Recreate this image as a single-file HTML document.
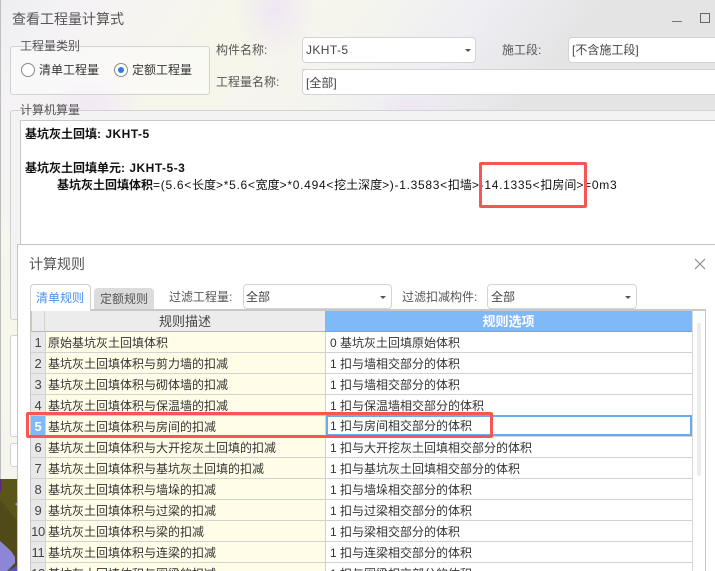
<!DOCTYPE html>
<html><head><meta charset="utf-8">
<style>
html,body{margin:0;padding:0;background:#e5e4e5}
#p{position:relative;width:715px;height:571px;overflow:hidden;font-family:"Liberation Sans","Noto Sans CJK SC",sans-serif;font-size:12px;color:#333;
background:
radial-gradient(ellipse 50px 30px at 90px 105px,#f0e8f4,rgba(240,232,244,0)),
radial-gradient(ellipse 40px 50px at 275px 10px,#efe6f3,rgba(239,230,243,0)),
radial-gradient(ellipse 40px 16px at 410px 108px,#efe6f3,rgba(239,230,243,0)),
linear-gradient(128deg,#eeeef2 0,#f5f3f5 8%,#f6f6ea 22%,#f5f5ee 32%,#eeeef3 42%,#e5e4e5 52%,#e4e3e4 100%)}
.a{position:absolute;box-sizing:border-box}
.t{position:absolute;white-space:nowrap;line-height:16px}
.w{position:absolute;box-sizing:border-box;background:#fff;border:1px solid #d4d4d4;border-radius:4px}
.arr{position:absolute;width:0;height:0;border-left:3.5px solid transparent;border-right:3.5px solid transparent;border-top:3.5px solid #555}
.row{position:absolute;left:31px;width:661px;height:21px;box-sizing:border-box;border-bottom:1px solid #d2d2d2}
.n{position:absolute;left:0;top:0;width:14px;height:20px;background:#e8e8e8;text-align:center;line-height:21px;font-size:13px;color:#444;border-right:1px solid #d2d2d2;box-sizing:content-box;white-space:nowrap;letter-spacing:-.3px}
.d{position:absolute;left:15px;top:0;height:20px;background:#fffde8;border-right:1px solid #d2d2d2;line-height:22px;padding-left:2px;box-sizing:content-box;white-space:nowrap;width:277px;overflow:hidden}
.o{position:absolute;left:295px;top:0;width:366px;height:20px;background:#fff;line-height:22px;padding-left:4px;box-sizing:border-box;white-space:nowrap;overflow:hidden}
.f{letter-spacing:.71px}
.f i{font-style:normal;letter-spacing:0}
.bl{letter-spacing:.5px}
.bl i{font-style:normal;letter-spacing:0}
</style></head><body><div id="p">

<div class="a" style="left:0;top:0;width:1px;height:480px;background:#bdbdbd"></div>
<div class="t" style="left:12px;top:11px;font-size:14px;color:#555">查看工程量计算式</div>
<div class="a" style="left:672px;top:21px;width:10px;height:1px;background:#777"></div>
<div class="a" style="left:700px;top:13px;width:10px;height:10px;border:1px solid #666"></div>

<!-- group 1 -->
<div class="a" style="left:10px;top:46px;width:200px;height:49px;border:1px solid #d2d2d2;border-radius:3px;background:rgba(255,255,255,.45)"></div>
<div class="t" style="left:20px;top:38px;color:#555">工程量类别</div>
<div class="a" style="left:21px;top:63px;width:14px;height:14px;border:1px solid #8a8a8a;border-radius:50%;background:#fff"></div>
<div class="t" style="left:39px;top:62px">清单工程量</div>
<div class="a" style="left:114px;top:63px;width:14px;height:14px;border:1px solid #8a8a8a;border-radius:50%;background:#fff"></div>
<div class="a" style="left:118px;top:67px;width:6px;height:6px;border-radius:50%;background:#2a7de1"></div>
<div class="t" style="left:132px;top:62px">定额工程量</div>

<div class="t" style="left:216px;top:42px;color:#555">构件名称:</div>
<div class="w" style="left:302px;top:37px;width:174px;height:26px"></div>
<div class="t" style="left:306px;top:42px;color:#444;letter-spacing:.4px">JKHT-5</div>
<div class="arr" style="left:465px;top:49px"></div>
<div class="t" style="left:502px;top:42px;color:#555">施工段:</div>
<div class="w" style="left:568px;top:37px;width:160px;height:26px"></div>
<div class="t" style="left:572px;top:42px;color:#444">[不含施工段]</div>
<div class="a" style="left:302px;top:69px;width:413px;height:1px;background:#cfcfcf"></div>
<div class="t" style="left:216px;top:74px;color:#555">工程量名称:</div>
<div class="w" style="left:302px;top:69px;width:430px;height:26px"></div>
<div class="t" style="left:306px;top:75px;color:#444">[全部]</div>

<!-- group 2 -->
<div class="a" style="left:10px;top:110px;width:720px;height:210px;border:1px solid #d2d2d2;border-radius:3px;background:#f3f3f3"></div>
<div class="t" style="left:20px;top:102px;color:#555">计算机算量</div>
<div class="a" style="left:20px;top:120px;width:710px;height:130px;background:#fff;border:1px solid #c8c8c8"></div>
<div class="t bl" style="left:25px;top:126px;font-weight:bold;color:#111"><i>基坑灰土回填</i>: JKHT-5</div>
<div class="t bl" style="left:25px;top:160px;font-weight:bold;color:#111"><i>基坑灰土回填单元</i>: JKHT-5-3</div>
<div class="t f" style="left:57px;top:177px;color:#111"><b style="letter-spacing:0">基坑灰土回填体积</b>=(5.6&lt;<i>长度</i>&gt;*5.6&lt;<i>宽度</i>&gt;*0.494&lt;<i>挖土深度</i>&gt;)-1.3583&lt;<i>扣墙</i>&gt;-14.1335&lt;<i>扣房间</i>&gt;=0m3</div>
<div class="a" style="left:479px;top:162px;width:108px;height:46px;border:3px solid #f85555;border-radius:2px"></div>

<!-- background boxes left of dialog -->
<div class="a" style="left:10px;top:335px;width:20px;height:102px;background:#fff;border:1px solid #d2d2d2;border-radius:3px"></div>
<div class="a" style="left:10px;top:443px;width:20px;height:24px;background:#fff;border:1px solid #d2d2d2;border-radius:3px"></div>

<!-- 3D view -->
<svg class="a" style="left:0;top:479px" width="18" height="92" viewBox="0 0 18 92">
<rect width="18" height="92" fill="#5a5518"/>
<polygon points="0,20 17,42 17,92 0,92" fill="#4f4a18"/>
<rect x="0" y="0" width="1.5" height="13" fill="#5b2a86"/>
<polygon points="0,62 11,72 15,78 15,84 7,92 0,92" fill="#8d86d6"/>
<polygon points="7,92 17,87 18,92" fill="#5b52b8"/>
<polygon points="15,25 18,23 18,28" fill="#9a94d0"/>
</svg>

<!-- dialog -->
<div class="a" style="left:17px;top:244px;width:710px;height:340px;background:#fff;border:1px solid #c4c4c4"></div>
<div class="t" style="left:29px;top:256px;font-size:14px;color:#555">计算规则</div>
<svg class="a" style="left:694px;top:258px" width="12" height="12" viewBox="0 0 12 12"><path d="M1 1L11 11M11 1L1 11" stroke="#888" stroke-width="1.1" fill="none"/></svg>

<div class="a" style="left:94px;top:288px;width:60px;height:22px;background:#dcdcdc;border-radius:4px 4px 0 0"></div>
<div class="t" style="left:100px;top:291px;color:#555">定额规则</div>
<div class="a" style="left:30px;top:284px;width:61px;height:27px;background:#fff;border:1px solid #cfcfcf;border-bottom:none;border-radius:4px 4px 0 0;z-index:2"></div>
<div class="t" style="left:36px;top:290px;color:#4a90f0;z-index:3">清单规则</div>

<div class="t" style="left:169px;top:289px;color:#555">过滤工程量:</div>
<div class="w" style="left:243px;top:284px;width:149px;height:25px"></div>
<div class="t" style="left:246px;top:289px;color:#444">全部</div>
<div class="arr" style="left:380px;top:296px"></div>
<div class="t" style="left:402px;top:289px;color:#555">过滤扣减构件:</div>
<div class="w" style="left:487px;top:284px;width:150px;height:25px"></div>
<div class="t" style="left:491px;top:289px;color:#444">全部</div>
<div class="arr" style="left:625px;top:296px"></div>

<!-- table -->
<div class="a" style="left:30px;top:309px;width:676px;height:270px;border:2px solid #c8c8c8;border-right-width:1.5px;border-bottom:none;background:#fff"></div>
<div class="a" style="left:697px;top:323px;width:4px;height:153px;background:#ececec;border-radius:2px"></div>
<div class="a" style="left:692px;top:311px;width:1px;height:260px;background:#d8d8d8"></div>

<div class="a" style="left:32px;top:311px;width:293px;height:21px;background:#ececec;border-bottom:1px solid #b5b5b5"></div>
<div class="a" style="left:44px;top:311px;width:1px;height:260px;background:#d2d2d2"></div>
<div class="t" style="left:45px;top:314px;width:280px;text-align:center;color:#444;font-size:13px">规则描述</div>
<div class="a" style="left:325px;top:311px;width:367px;height:21px;background:#7fb9f8;border-bottom:1px solid #6aa8ea"></div>
<div class="t" style="left:325px;top:314px;width:367px;text-align:center;color:#fff;font-weight:bold;font-size:13px">规则选项</div>

<div class="row" style="top:332px"><div class="n">1</div><div class="d">原始基坑灰土回填体积</div><div class="o">0 基坑灰土回填原始体积</div></div>
<div class="row" style="top:353px"><div class="n">2</div><div class="d">基坑灰土回填体积与剪力墙的扣减</div><div class="o">1 扣与墙相交部分的体积</div></div>
<div class="row" style="top:374px"><div class="n">3</div><div class="d">基坑灰土回填体积与砌体墙的扣减</div><div class="o">1 扣与墙相交部分的体积</div></div>
<div class="row" style="top:395px"><div class="n">4</div><div class="d">基坑灰土回填体积与保温墙的扣减</div><div class="o">1 扣与保温墙相交部分的体积</div></div>
<div class="row" style="top:416px"><div class="n" style="background:#7fb9f8;color:#fff;font-weight:bold">5</div><div class="d">基坑灰土回填体积与房间的扣减</div><div class="o" style="border:2px solid #6aaaee;padding-left:2px;line-height:18px;top:-1px;height:21px">1 扣与房间相交部分的体积</div></div>
<div class="row" style="top:437px"><div class="n">6</div><div class="d">基坑灰土回填体积与大开挖灰土回填的扣减</div><div class="o">1 扣与大开挖灰土回填相交部分的体积</div></div>
<div class="row" style="top:458px"><div class="n">7</div><div class="d">基坑灰土回填体积与基坑灰土回填的扣减</div><div class="o">1 扣与基坑灰土回填相交部分的体积</div></div>
<div class="row" style="top:479px"><div class="n">8</div><div class="d">基坑灰土回填体积与墙垛的扣减</div><div class="o">1 扣与墙垛相交部分的体积</div></div>
<div class="row" style="top:500px"><div class="n">9</div><div class="d">基坑灰土回填体积与过梁的扣减</div><div class="o">1 扣与过梁相交部分的体积</div></div>
<div class="row" style="top:521px"><div class="n">10</div><div class="d">基坑灰土回填体积与梁的扣减</div><div class="o">1 扣与梁相交部分的体积</div></div>
<div class="row" style="top:542px"><div class="n">11</div><div class="d">基坑灰土回填体积与连梁的扣减</div><div class="o">1 扣与连梁相交部分的体积</div></div>
<div class="row" style="top:563px"><div class="n">12</div><div class="d">基坑灰土回填体积与圈梁的扣减</div><div class="o">1 扣与圈梁相交部分的体积</div></div>

<div class="a" style="left:26px;top:412px;width:467px;height:26px;border:3px solid #f85555;border-radius:2px"></div>
</div></body></html>
